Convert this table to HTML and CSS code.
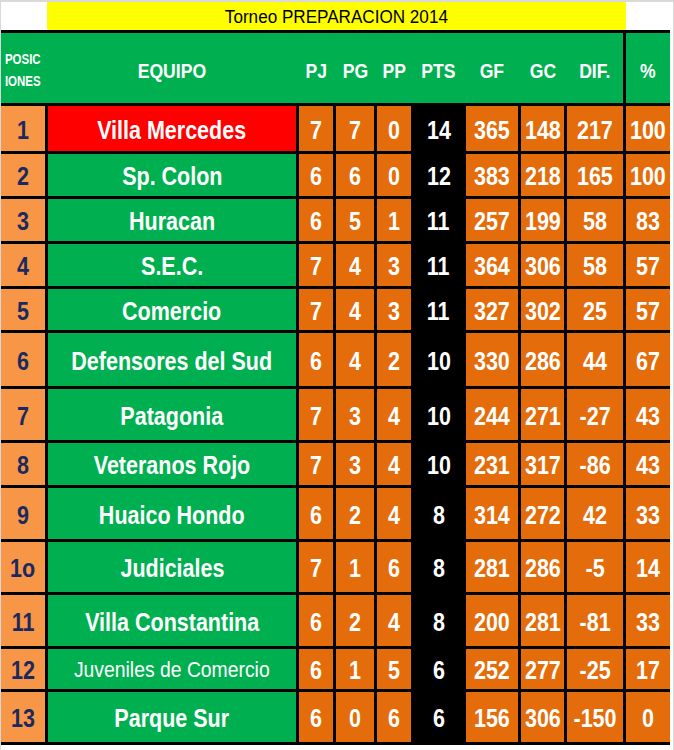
FILE: index.html
```html
<!DOCTYPE html>
<html lang="es">
<head>
<meta charset="utf-8">
<title>Torneo PREPARACION 2014</title>
<link rel="stylesheet" href="styles.css">
</head>
<body>
<div class="sheet">
  <div class="title-row">
    <div class="blank first"></div>
    <div class="title"><span>Torneo PREPARACION 2014</span></div>
    <div class="blank"></div>
  </div>
  <div class="table">
    <div class="head">
      <div class="h pos-h"><span>POSIC</span><span>IONES</span></div>
      <div class="h"><span>EQUIPO</span></div>
      <div class="h"><span>PJ</span></div>
      <div class="h"><span>PG</span></div>
      <div class="h"><span>PP</span></div>
      <div class="h"><span>PTS</span></div>
      <div class="h"><span>GF</span></div>
      <div class="h"><span>GC</span></div>
      <div class="h"><span>DIF.</span></div>
      <div class="h pct-h"><span>%</span></div>
    </div>
    <div class="body">
      <div class="c pos"><span>1</span></div><div class="c team red"><span>Villa Mercedes</span></div><div class="c num"><span>7</span></div><div class="c num"><span>7</span></div><div class="c num"><span>0</span></div><div class="c pts"><span>14</span></div><div class="c num"><span>365</span></div><div class="c num"><span>148</span></div><div class="c num"><span>217</span></div><div class="c num"><span>100</span></div>
      <div class="c pos"><span>2</span></div><div class="c team"><span>Sp. Colon</span></div><div class="c num"><span>6</span></div><div class="c num"><span>6</span></div><div class="c num"><span>0</span></div><div class="c pts"><span>12</span></div><div class="c num"><span>383</span></div><div class="c num"><span>218</span></div><div class="c num"><span>165</span></div><div class="c num"><span>100</span></div>
      <div class="c pos"><span>3</span></div><div class="c team"><span>Huracan</span></div><div class="c num"><span>6</span></div><div class="c num"><span>5</span></div><div class="c num"><span>1</span></div><div class="c pts"><span>11</span></div><div class="c num"><span>257</span></div><div class="c num"><span>199</span></div><div class="c num"><span>58</span></div><div class="c num"><span>83</span></div>
      <div class="c pos"><span>4</span></div><div class="c team"><span>S.E.C.</span></div><div class="c num"><span>7</span></div><div class="c num"><span>4</span></div><div class="c num"><span>3</span></div><div class="c pts"><span>11</span></div><div class="c num"><span>364</span></div><div class="c num"><span>306</span></div><div class="c num"><span>58</span></div><div class="c num"><span>57</span></div>
      <div class="c pos"><span>5</span></div><div class="c team"><span>Comercio</span></div><div class="c num"><span>7</span></div><div class="c num"><span>4</span></div><div class="c num"><span>3</span></div><div class="c pts"><span>11</span></div><div class="c num"><span>327</span></div><div class="c num"><span>302</span></div><div class="c num"><span>25</span></div><div class="c num"><span>57</span></div>
      <div class="c pos"><span>6</span></div><div class="c team"><span>Defensores del Sud</span></div><div class="c num"><span>6</span></div><div class="c num"><span>4</span></div><div class="c num"><span>2</span></div><div class="c pts"><span>10</span></div><div class="c num"><span>330</span></div><div class="c num"><span>286</span></div><div class="c num"><span>44</span></div><div class="c num"><span>67</span></div>
      <div class="c pos"><span>7</span></div><div class="c team"><span>Patagonia</span></div><div class="c num"><span>7</span></div><div class="c num"><span>3</span></div><div class="c num"><span>4</span></div><div class="c pts"><span>10</span></div><div class="c num"><span>244</span></div><div class="c num"><span>271</span></div><div class="c num"><span>-27</span></div><div class="c num"><span>43</span></div>
      <div class="c pos"><span>8</span></div><div class="c team"><span>Veteranos Rojo</span></div><div class="c num"><span>7</span></div><div class="c num"><span>3</span></div><div class="c num"><span>4</span></div><div class="c pts"><span>10</span></div><div class="c num"><span>231</span></div><div class="c num"><span>317</span></div><div class="c num"><span>-86</span></div><div class="c num"><span>43</span></div>
      <div class="c pos"><span>9</span></div><div class="c team"><span>Huaico Hondo</span></div><div class="c num"><span>6</span></div><div class="c num"><span>2</span></div><div class="c num"><span>4</span></div><div class="c pts"><span>8</span></div><div class="c num"><span>314</span></div><div class="c num"><span>272</span></div><div class="c num"><span>42</span></div><div class="c num"><span>33</span></div>
      <div class="c pos"><span>1o</span></div><div class="c team"><span>Judiciales</span></div><div class="c num"><span>7</span></div><div class="c num"><span>1</span></div><div class="c num"><span>6</span></div><div class="c pts"><span>8</span></div><div class="c num"><span>281</span></div><div class="c num"><span>286</span></div><div class="c num"><span>-5</span></div><div class="c num"><span>14</span></div>
      <div class="c pos"><span>11</span></div><div class="c team"><span>Villa Constantina</span></div><div class="c num"><span>6</span></div><div class="c num"><span>2</span></div><div class="c num"><span>4</span></div><div class="c pts"><span>8</span></div><div class="c num"><span>200</span></div><div class="c num"><span>281</span></div><div class="c num"><span>-81</span></div><div class="c num"><span>33</span></div>
      <div class="c pos"><span>12</span></div><div class="c team small"><span>Juveniles de Comercio</span></div><div class="c num"><span>6</span></div><div class="c num"><span>1</span></div><div class="c num"><span>5</span></div><div class="c pts"><span>6</span></div><div class="c num"><span>252</span></div><div class="c num"><span>277</span></div><div class="c num"><span>-25</span></div><div class="c num"><span>17</span></div>
      <div class="c pos"><span>13</span></div><div class="c team"><span>Parque Sur</span></div><div class="c num"><span>6</span></div><div class="c num"><span>0</span></div><div class="c num"><span>6</span></div><div class="c pts"><span>6</span></div><div class="c num"><span>156</span></div><div class="c num"><span>306</span></div><div class="c num"><span>-150</span></div><div class="c num"><span>0</span></div>
    </div>
  </div>
</div>
</body>
</html>
```

FILE: styles.css
```css
* { box-sizing: border-box; }

html, body {
  margin: 0;
  padding: 0;
  background: #ffffff;
}

body {
  font-family: "Liberation Sans", Arial, sans-serif;
}

.sheet {
  width: 674px;
  height: 750px;
  border-top: 2px solid #d9d9d9;
  border-left: 1px solid #d9d9d9;
  border-right: 1px solid #d9d9d9;
  background: #ffffff;
}

/* title row */
.title-row {
  display: flex;
  height: 28px;
}
.blank {
  flex: 1;
  background: #ffffff;
}
.blank.first {
  flex: 0 0 46px;
}
.title {
  flex: 0 0 579px;
  background: #ffff00;
  display: flex;
  align-items: center;
  justify-content: center;
  color: #000000;
  font-size: 18px;
  line-height: 1;
  padding-top: 2px;
}
.title span {
  display: inline-block;
  transform: scaleX(0.95);
}

/* table */
.table {
  width: 669px;
  border-top: 3px solid #000000;
  border-bottom: 3px solid #000000;
}

.head,
.body {
  display: grid;
  grid-template-columns: 44px 248px 34px 38px 34px 49px 52px 43px 56px 44px;
  column-gap: 3px;
}

.head {
  height: 70px;
  background: #00b050;
}
.h {
  display: flex;
  align-items: center;
  justify-content: center;
  color: #ffffff;
  font-weight: bold;
  font-size: 20px;
  line-height: 1;
  padding-top: 5px;
}
.h span {
  display: inline-block;
  transform: scaleX(0.88);
}
.pos-h {
  flex-direction: column;
  font-size: 14px;
  line-height: 22px;
  padding-top: 4px;
}
.pos-h span {
  transform: scaleX(0.82);
}
.pct-h {
  box-shadow: -3px 0 0 #000000;
}

.body {
  background: #000000;
  border-top: 3px solid #000000;
  row-gap: 3px;
  grid-template-rows: 45px 42px 42px 42px 41px 53px 51px 42px 51px 50px 51px 40px 50px;
}

.c {
  display: flex;
  align-items: center;
  justify-content: center;
  color: #ffffff;
  font-weight: bold;
  font-size: 25px;
  line-height: 1;
  white-space: nowrap;
  padding-top: 3px;
}
.c span {
  display: inline-block;
  transform: scaleX(0.86);
}

.pos {
  background: #f79646;
  color: #1b2a5e;
}
.team {
  background: #00b050;
}
.team.red {
  background: #ff0000;
}
.team.small {
  font-size: 22.5px;
  font-weight: normal;
}
.num {
  background: #e46c0a;
}
.pts {
  background: #000000;
}
```
